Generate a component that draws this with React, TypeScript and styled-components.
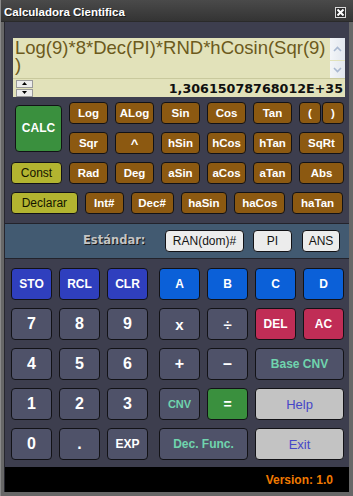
import styled, { createGlobalStyle } from "styled-components";

const GlobalStyle = createGlobalStyle`
  html, body { margin: 0; padding: 0; background: #ffffff; }
  body { font-family: "Liberation Sans", Arial, sans-serif; }
  #root { width: 353px; height: 496px; }
`;

type Tone = "dark" | "brown" | "green" | "olive" | "navy" | "blue" | "red" | "light" | "std";

const tones: Record<Tone, { bg: string; fg: string }> = {
  dark: { bg: "#4f5269", fg: "#ffffff" },
  brown: { bg: "#8c5911", fg: "#ffffff" },
  green: { bg: "#3a903e", fg: "#ffffff" },
  olive: { bg: "#b3b430", fg: "#141400" },
  navy: { bg: "#2f3fbe", fg: "#ffffff" },
  blue: { bg: "#0b60d8", fg: "#ffffff" },
  red: { bg: "#c02d56", fg: "#ffffff" },
  light: { bg: "#c3c3c3", fg: "#4646c8" },
  std: { bg: "#ececec", fg: "#141414" },
};

const Window = styled.div`
  width: 353px;
  height: 496px;
  box-sizing: border-box;
  background: #676767;
  border-left: 1px solid #8a8a8a;
  display: flex;
  flex-direction: column;
`;

const TitleBar = styled.div`
  height: 21px;
  flex: none;
  display: flex;
  align-items: center;
  justify-content: space-between;
  padding: 0 7px 0 3px;
  background: linear-gradient(#4a4a4a, #343434);
  border-bottom: 1px solid #2a2a2a;
`;

const Title = styled.span`
  color: #ffffff;
  font-weight: bold;
  font-size: 11.5px;
  padding-top: 3px;
  text-shadow: 1px 1px 0 #1c1c1c;
`;

const CloseBox = styled.div`
  width: 9px;
  height: 9px;
  border: 1px solid #d8d8d8;
  background: #2c2c2c;
  margin-top: 3px;
  display: flex;
  align-items: center;
  justify-content: center;
`;

const Body = styled.div`
  flex: 1;
  margin: 0 4px 4px 3px;
  background: #3d3e4e;
  border-left: 1px solid #26262e;
  display: flex;
  flex-direction: column;
`;

const Display = styled.div`
  margin: 16px 4px 0 8px;
  height: 59px;
  background: #e2e2ba;
  display: flex;
  flex-direction: column;
`;

const DisplayTop = styled.div`
  height: 40px;
  display: flex;
  justify-content: space-between;
  border-bottom: 1px solid #c9c99d;
`;

const Expression = styled.div`
  width: 311px;
  padding: 1px 0 0 2px;
  font-size: 18.5px;
  line-height: 17px;
  color: #6c5a1c;
  word-break: break-all;
  line-break: anywhere;
  overflow-wrap: anywhere;
  overflow: hidden;
`;

const ScrollBar = styled.div`
  width: 15px;
  display: flex;
  flex-direction: column;
  gap: 1px;
`;

const ScrollBtn = styled.div<{ $h: number }>`
  height: ${(p) => p.$h}px;
  background: linear-gradient(90deg, #f3f5f8, #e2e7ee);
  display: flex;
  align-items: center;
  justify-content: center;
`;

const DisplayBottom = styled.div`
  flex: 1;
  display: flex;
  align-items: center;
  justify-content: space-between;
  padding: 0 2px 0 3px;
`;

const Spinner = styled.div`
  display: flex;
  flex-direction: column;
  gap: 1px;
`;

const SpinBtn = styled.div`
  width: 15px;
  height: 6px;
  background: #ececec;
  border: 1px solid #9a9a9a;
  display: flex;
  align-items: center;
  justify-content: center;
`;

const Result = styled.div`
  font-family: "DejaVu Sans", Verdana, sans-serif;
  font-weight: bold;
  font-size: 12.7px;
  color: #101010;
`;

const Key = styled.button<{ $tone: Tone; $w?: number; $size?: number; $weight?: string; $fg?: string }>`
  box-sizing: border-box;
  margin: 0;
  padding: 0;
  ${(p) => (p.$w ? `width: ${p.$w}px;` : "")}
  background: ${(p) => tones[p.$tone].bg};
  color: ${(p) => p.$fg ?? tones[p.$tone].fg};
  border: 1px solid #121216;
  border-radius: 4px;
  font-family: "Liberation Sans", Arial, sans-serif;
  font-size: ${(p) => p.$size ?? 11.5}px;
  font-weight: ${(p) => p.$weight ?? "bold"};
  display: flex;
  align-items: center;
  justify-content: center;
  white-space: nowrap;
`;

const FuncGrid = styled.div`
  margin: 5px 6px 0 6px;
  display: grid;
  grid-template-columns: 51px repeat(5, 39px) 45px;
  grid-auto-rows: 22px;
  column-gap: 7px;
  row-gap: 8px;
`;

const CalcKey = styled(Key)`
  grid-row: span 2;
  width: 47px;
  height: 47px;
  align-self: center;
  justify-self: end;
`;

const ParenPair = styled.div`
  display: flex;
  gap: 1px;
  & > * { flex: 1; }
`;

const FuncRow = styled.div`
  margin: 8px 6px 0 6px;
  height: 22px;
  display: flex;
  gap: 7px;
`;

const StdBar = styled.div`
  margin-top: 9px;
  height: 36px;
  box-sizing: border-box;
  background: #425a71;
  border-top: 1px solid #23232b;
  border-bottom: 1px solid #23232b;
  display: flex;
  align-items: center;
  padding-left: 78px;
`;

const StdLabel = styled.span`
  width: 82px;
  font-family: "DejaVu Sans", Verdana, sans-serif;
  color: #c4c4c4;
  font-weight: bold;
  font-size: 11.5px;
  text-shadow: 1px 1px 0 #1a1a1a;
  margin-top: -2px;
`;

const StdKey = styled(Key)<{ $gap?: number }>`
  height: 22px;
  margin-left: ${(p) => p.$gap ?? 0}px;
  font-size: 12px;
  font-weight: normal;
`;

const MainPad = styled.div`
  margin: 9px 6px 0 6px;
  display: flex;
  gap: 11px;
`;

const Pad = styled.div<{ $cols: number }>`
  display: grid;
  grid-template-columns: repeat(${(p) => p.$cols}, 41px);
  grid-auto-rows: 32px;
  column-gap: 7px;
  row-gap: 8px;
`;

const WideKey = styled(Key)`
  grid-column: span 2;
`;

const Footer = styled.div`
  margin-top: auto;
  height: 25px;
  background: #000000;
  display: flex;
  align-items: center;
  justify-content: flex-end;
  padding-right: 16px;
`;

const Version = styled.span`
  color: #f07a00;
  font-weight: bold;
  font-size: 12px;
`;

const Chevron = ({ up }: { up: boolean }) => (
  <svg width="9" height="6" viewBox="0 0 9 6">
    <path
      d={up ? "M1 5 L4.5 1.5 L8 5" : "M1 1 L4.5 4.5 L8 1"}
      fill="none"
      stroke="#a9b8d0"
      strokeWidth="1.6"
    />
  </svg>
);

const Tri = ({ up }: { up: boolean }) => (
  <svg width="5" height="3" viewBox="0 0 5 3">
    <path d={up ? "M0 3 L2.5 0 L5 3 Z" : "M0 0 L2.5 3 L5 0 Z"} fill="#000" />
  </svg>
);

const funcRows = [
  ["Log", "ALog", "Sin", "Cos", "Tan"],
  ["Sqr", "^", "hSin", "hCos", "hTan", "SqRt"],
  ["Rad", "Deg", "aSin", "aCos", "aTan", "Abs"],
];

const row4: [string, number][] = [
  ["Int#", 39],
  ["Dec#", 43],
  ["haSin", 47],
  ["haCos", 51],
  ["haTan", 51],
];

const teal = "#70d4ae";

export default function App() {
  return (
    <>
      <GlobalStyle />
      <Window>
        <TitleBar>
          <Title>Calculadora Cientifica</Title>
          <CloseBox>
            <svg width="7" height="7" viewBox="0 0 7 7">
              <path d="M0.5 0.5 L6.5 6.5 M6.5 0.5 L0.5 6.5" stroke="#ffffff" strokeWidth="2" />
            </svg>
          </CloseBox>
        </TitleBar>
        <Body>
          <Display>
            <DisplayTop>
              <Expression>Log(9)*8*Dec(PI)*RND*hCosin(Sqr(9))</Expression>
              <ScrollBar>
                <ScrollBtn $h={22}>
                  <Chevron up />
                </ScrollBtn>
                <ScrollBtn $h={17}>
                  <Chevron up={false} />
                </ScrollBtn>
              </ScrollBar>
            </DisplayTop>
            <DisplayBottom>
              <Spinner>
                <SpinBtn>
                  <Tri up />
                </SpinBtn>
                <SpinBtn>
                  <Tri up={false} />
                </SpinBtn>
              </Spinner>
              <Result>1,30615078768012E+35</Result>
            </DisplayBottom>
          </Display>

          <FuncGrid>
            <CalcKey $tone="green" $size={12}>CALC</CalcKey>
            {funcRows[0].map((k) => (
              <Key key={k} $tone="brown">{k}</Key>
            ))}
            <ParenPair>
              <Key $tone="brown">(</Key>
              <Key $tone="brown">)</Key>
            </ParenPair>
            {funcRows[1].map((k) => (
              <Key key={k} $tone="brown" $size={k === "^" ? 13 : 11.5}>{k}</Key>
            ))}
            <Key $tone="olive" $size={12} $weight="normal">Const</Key>
            {funcRows[2].map((k) => (
              <Key key={k} $tone="brown">{k}</Key>
            ))}
          </FuncGrid>
          <FuncRow>
            <Key $tone="olive" $w={67} $size={12} $weight="normal">Declarar</Key>
            {row4.map(([k, w]) => (
              <Key key={k} $tone="brown" $w={w}>{k}</Key>
            ))}
          </FuncRow>

          <StdBar>
            <StdLabel>Estándar:</StdLabel>
            <StdKey $tone="std" $w={79}>RAN(dom)#</StdKey>
            <StdKey $tone="std" $w={39} $gap={9}>PI</StdKey>
            <StdKey $tone="std" $w={38} $gap={10}>ANS</StdKey>
          </StdBar>

          <MainPad>
            <Pad $cols={3}>
              <Key $tone="navy" $size={12}>STO</Key>
              <Key $tone="navy" $size={12}>RCL</Key>
              <Key $tone="navy" $size={12}>CLR</Key>
              {["7", "8", "9", "4", "5", "6", "1", "2", "3", "0", "."].map((d) => (
                <Key key={d} $tone="dark" $size={16}>{d}</Key>
              ))}
              <Key $tone="dark" $size={12}>EXP</Key>
            </Pad>
            <Pad $cols={4}>
              {["A", "B", "C", "D"].map((k) => (
                <Key key={k} $tone="blue" $size={12}>{k}</Key>
              ))}
              <Key $tone="dark" $size={15}>x</Key>
              <Key $tone="dark" $size={15}>÷</Key>
              <Key $tone="red" $size={12}>DEL</Key>
              <Key $tone="red" $size={12}>AC</Key>
              <Key $tone="dark" $size={16}>+</Key>
              <Key $tone="dark" $size={16}>–</Key>
              <WideKey $tone="dark" $size={12} $fg={teal}>Base CNV</WideKey>
              <Key $tone="dark" $size={11} $fg={teal}>CNV</Key>
              <Key $tone="green" $size={14}>=</Key>
              <WideKey $tone="light" $size={13} $weight="normal">Help</WideKey>
              <WideKey $tone="dark" $size={12} $fg={teal}>Dec. Func.</WideKey>
              <WideKey $tone="light" $size={13} $weight="normal">Exit</WideKey>
            </Pad>
          </MainPad>

          <Footer>
            <Version>Version: 1.0</Version>
          </Footer>
        </Body>
      </Window>
    </>
  );
}
